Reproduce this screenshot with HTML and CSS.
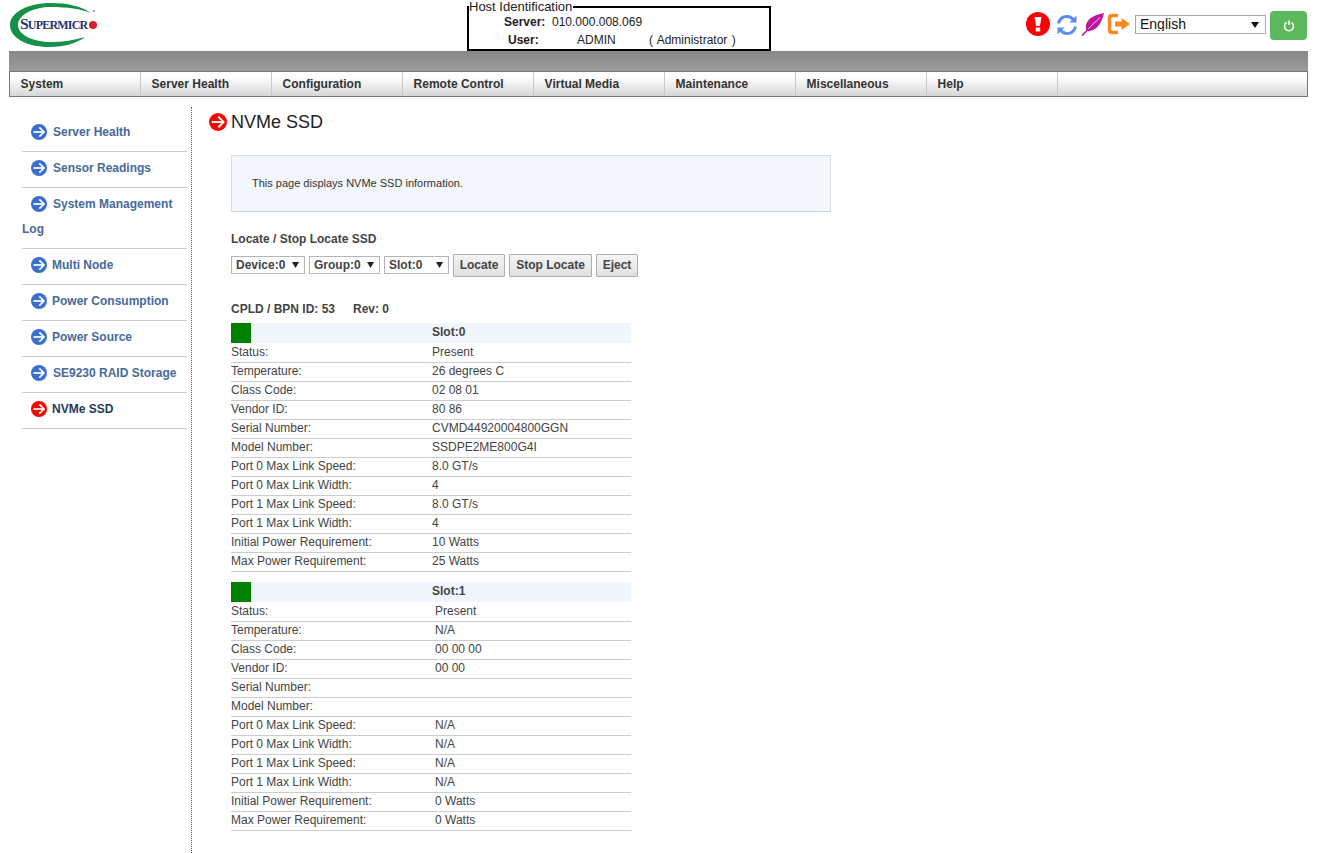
FILE: index.html
```html
<!DOCTYPE html>
<html lang="en">
<head>
<meta charset="utf-8">
<title>NVMe SSD</title>
<link rel="stylesheet" href="styles.css">
</head>
<body>
<svg class="defs" width="0" height="0"><defs>
  <g id="arrow-mark" fill="none" stroke="#fff" stroke-width="1.700"><path d="M2.500 8H12.500"/><path d="M8.300 3.300L13 8l-4.700 4.700"/></g>
</defs></svg>
<header class="top">
  <div class="logo">
    <svg width="92" height="48" viewBox="0 0 92 48">
      <path d="M82 12C72 5 58 2 42 2C18 2 1 12 1 24C1 37 18 46 40 46C56 46 68 42 76 36C66 39 54 41 42 41C24 41 9 34 9 24C9 14 24 6 42 6C58 6 72 8 82 12Z" fill="#149048"/>
      <circle cx="84" cy="24" r="4" fill="#d5202b"/>
      <circle cx="85" cy="10" r="1" fill="#8a8a8a"/>
    </svg>
    <span class="logo-text"><span class="logo-big">S</span>UPERMICR</span>
  </div>
  <fieldset class="host">
    <legend class="host-legend">Host Identification</legend>
    <div class="host-row"><b class="host-key host-server">Server:</b><span>010.000.008.069</span></div>
    <div class="host-row"><b class="host-key host-user">User:</b><span class="host-name">ADMIN</span><span class="host-role">( Administrator )</span></div>
  </fieldset>
  <div class="tools">
    <svg class="tool tool-alert" width="24" height="24" viewBox="0 0 24 24"><circle cx="12" cy="12" r="12" fill="#f00"/><path d="M8.500 5h7l-1.600 9h-3.800z" fill="#fff"/><rect x="9.800" y="15.500" width="4.400" height="4" fill="#fff"/></svg>
    <svg class="tool tool-sync" width="22" height="22" viewBox="0 0 22 22" fill="none" stroke="#5b8def" stroke-width="3"><path d="M2.500 9.500C3.500 5 7 2.500 11 2.500c3 0 5 1.200 6.500 3.500"/><path d="M19.500 12.500C18.500 17 15 19.500 11 19.500c-3 0-5-1.200-6.500-3.500"/><path d="M20.500 1.500v7h-7z" fill="#5b8def" stroke="none"/><path d="M1.500 20.500v-7h7z" fill="#5b8def" stroke="none"/></svg>
    <svg class="tool tool-leaf" width="23" height="24" viewBox="0 0 23 24"><path d="M23 1C15 3 7 5 5 13C4.500 16 5 18 6 19C12 20 20 15 23 1Z" fill="#c0169c"/><path d="M19 5.500L7 17" stroke="#f3c6ea" stroke-width="1" fill="none"/><path d="M7.500 17L1 23.500" stroke="#c0169c" stroke-width="1.600" fill="none"/></svg>
    <svg class="tool tool-exit" width="24" height="24" viewBox="0 0 24 24"><path d="M11 3.500H5Q2.500 3.500 2.500 6v12Q2.500 20.500 5 20.500h6" fill="none" stroke="#fb8a1e" stroke-width="3.500"/><path d="M8 9.500h6.500V6l8.500 6-8.500 6v-3.500H8z" fill="#fb8a1e"/></svg>
    <select class="lang"><option>English</option></select>
    <button class="power" type="button"><svg width="12" height="12" viewBox="0 0 12 12" fill="none" stroke="#fff" stroke-width="1.600"><path d="M3.500 2.500a4.500 4.500 0 1 0 5 0"/><path d="M6 .5v4.500"/></svg></button>
  </div>
</header>
<div class="band"></div>
<nav class="menu">
  <a class="menu-item">System</a><a class="menu-item">Server Health</a><a class="menu-item">Configuration</a><a class="menu-item">Remote Control</a><a class="menu-item">Virtual Media</a><a class="menu-item">Maintenance</a><a class="menu-item">Miscellaneous</a><a class="menu-item">Help</a>
</nav>
<div class="main">
  <aside class="side">
    <a class="side-item"><svg class="arrow" viewBox="0 0 16 16"><circle cx="8" cy="8" r="8" fill="#3a6fd0"/><use href="#arrow-mark"/></svg>Server Health</a>
    <a class="side-item"><svg class="arrow" viewBox="0 0 16 16"><circle cx="8" cy="8" r="8" fill="#3a6fd0"/><use href="#arrow-mark"/></svg>Sensor Readings</a>
    <a class="side-item"><svg class="arrow" viewBox="0 0 16 16"><circle cx="8" cy="8" r="8" fill="#3a6fd0"/><use href="#arrow-mark"/></svg>System Management Log</a>
    <a class="side-item tight"><svg class="arrow" viewBox="0 0 16 16"><circle cx="8" cy="8" r="8" fill="#3a6fd0"/><use href="#arrow-mark"/></svg>Multi Node</a>
    <a class="side-item tight"><svg class="arrow" viewBox="0 0 16 16"><circle cx="8" cy="8" r="8" fill="#3a6fd0"/><use href="#arrow-mark"/></svg>Power Consumption</a>
    <a class="side-item tight"><svg class="arrow" viewBox="0 0 16 16"><circle cx="8" cy="8" r="8" fill="#3a6fd0"/><use href="#arrow-mark"/></svg>Power Source</a>
    <a class="side-item"><svg class="arrow" viewBox="0 0 16 16"><circle cx="8" cy="8" r="8" fill="#3a6fd0"/><use href="#arrow-mark"/></svg>SE9230 RAID Storage</a>
    <a class="side-item tight active"><svg class="arrow" viewBox="0 0 16 16"><circle cx="8" cy="8" r="8" fill="#f00"/><use href="#arrow-mark"/></svg>NVMe SSD</a>
  </aside>
  <main class="content">
    <h1 class="title"><svg class="title-arrow" viewBox="0 0 16 16"><circle cx="8" cy="8" r="8" fill="#f00"/><use href="#arrow-mark"/></svg>NVMe SSD</h1>
    <div class="body">
      <div class="note">This page displays NVMe SSD information.</div>
      <h2 class="locate-title">Locate / Stop Locate SSD</h2>
      <form class="locate">
        <select class="pick pick-device"><option>Device:0</option></select>
        <select class="pick pick-group"><option>Group:0</option></select>
        <select class="pick pick-slot"><option>Slot:0</option></select>
        <button class="btn btn-locate" type="button">Locate</button>
        <button class="btn btn-stop" type="button">Stop Locate</button>
        <button class="btn btn-eject" type="button">Eject</button>
      </form>
      <p class="cpld"><span class="cpld-id">CPLD / BPN ID: 53</span><span>Rev: 0</span></p>
      <table class="slot">
        <tr class="slot-head"><td class="k"><span class="led"></span></td><td class="v">Slot:0</td></tr>
        <tr><td class="k">Status:</td><td class="v">Present</td></tr>
        <tr><td class="k">Temperature:</td><td class="v">26 degrees C</td></tr>
        <tr><td class="k">Class Code:</td><td class="v">02 08 01</td></tr>
        <tr><td class="k">Vendor ID:</td><td class="v">80 86</td></tr>
        <tr><td class="k">Serial Number:</td><td class="v">CVMD44920004800GGN</td></tr>
        <tr><td class="k">Model Number:</td><td class="v">SSDPE2ME800G4I</td></tr>
        <tr><td class="k">Port 0 Max Link Speed:</td><td class="v">8.0 GT/s</td></tr>
        <tr><td class="k">Port 0 Max Link Width:</td><td class="v">4</td></tr>
        <tr><td class="k">Port 1 Max Link Speed:</td><td class="v">8.0 GT/s</td></tr>
        <tr><td class="k">Port 1 Max Link Width:</td><td class="v">4</td></tr>
        <tr><td class="k">Initial Power Requirement:</td><td class="v">10 Watts</td></tr>
        <tr><td class="k">Max Power Requirement:</td><td class="v">25 Watts</td></tr>
      </table>
      <table class="slot slot-second">
        <tr class="slot-head"><td class="k"><span class="led"></span></td><td class="v">Slot:1</td></tr>
        <tr><td class="k">Status:</td><td class="v">Present</td></tr>
        <tr><td class="k">Temperature:</td><td class="v">N/A</td></tr>
        <tr><td class="k">Class Code:</td><td class="v">00 00 00</td></tr>
        <tr><td class="k">Vendor ID:</td><td class="v">00 00</td></tr>
        <tr><td class="k">Serial Number:</td><td class="v"></td></tr>
        <tr><td class="k">Model Number:</td><td class="v"></td></tr>
        <tr><td class="k">Port 0 Max Link Speed:</td><td class="v">N/A</td></tr>
        <tr><td class="k">Port 0 Max Link Width:</td><td class="v">N/A</td></tr>
        <tr><td class="k">Port 1 Max Link Speed:</td><td class="v">N/A</td></tr>
        <tr><td class="k">Port 1 Max Link Width:</td><td class="v">N/A</td></tr>
        <tr><td class="k">Initial Power Requirement:</td><td class="v">0 Watts</td></tr>
        <tr><td class="k">Max Power Requirement:</td><td class="v">0 Watts</td></tr>
      </table>
    </div>
  </main>
</div>
</body>
</html>
```
FILE: styles.css
```css
* { box-sizing: border-box; }
html, body { margin: 0; height: 853px; overflow: hidden; }
body { background: #fff; color: #333; font-family: "Liberation Sans", Arial, sans-serif; font-size: 12px; }
.defs { position: absolute; }

.top { display: flex; height: 51px; position: relative; }
.logo { position: absolute; left: 9px; top: 1px; width: 92px; height: 48px; }
.logo-text { position: absolute; left: 11px; top: 14px; font-family: "Liberation Serif", serif; font-size: 12px; font-weight: bold; color: #27346f; letter-spacing: -.8px; white-space: nowrap; }
.logo-big { font-size: 15.500px; }

.host { position: absolute; left: 467px; top: 6px; width: 304px; height: 45px; margin: 0; padding: 0; border: 2px solid #000; color: #222; }
.host-legend { position: absolute; left: 0; top: -9px; padding: 0 1px 0 0; background: #fff; font-size: 13px; line-height: 15px; color: #222; white-space: nowrap; }
.host-row { display: flex; height: 18px; align-items: center; font-size: 12px; }
.host-row:first-of-type { height: 19px; margin-top: 4px; }
.host-key { color: #222; }
.host-server { margin-left: 35px; width: 48px; }
.host-user { margin-left: 39px; width: 69px; }
.host-name { width: 72px; }
.host-role { word-spacing: 1px; }

.tools { position: absolute; left: 1026px; top: 12px; display: flex; align-items: flex-start; }
.tool { flex: none; }
.tool-sync { margin: 2px 3px 0 6px; }
.tool-leaf { margin-right: 3px; }
.tool-exit { margin-right: 4px; }
.lang { width: 131px; height: 19px; margin-top: 3px; padding: 0 0 2px 4px; appearance: none; background: #fff url("data:image/svg+xml,%3Csvg xmlns='http://www.w3.org/2000/svg' width='8' height='6'%3E%3Cpath d='M0 0h8L4 6z' fill='%23111'/%3E%3C/svg%3E") no-repeat right 6px center; border: 1px solid #a9a9a9; font-family: "Liberation Sans", Arial, sans-serif; font-size: 14px; color: #111; border-radius: 0; }
.power { width: 37px; height: 29px; margin: -1px 0 0 4px; display: flex; align-items: center; justify-content: center; background: #5cb85c; border: 0; border-radius: 4px; padding: 0; }

.band { height: 20px; margin: 0 17px 0 9px; background: linear-gradient(#888, #9c9c9c); }
.menu { display: flex; height: 26px; margin: 0 17px 0 9px; border: 1px solid #777; background: linear-gradient(#fff 20%, #d6d6d6); }
.menu-item { width: 131px; padding: 5px 0 0 10.600px; border-right: 1px solid #c9c9c9; font-size: 12px; line-height: 15px; font-weight: bold; color: #333; }

.main { display: flex; height: 756px; }
.side { width: 192px; margin: 10px 0 0 0; padding: 9px 4px 0 22px; border-right: 1px dotted #36618f; flex: none; }
.side-item { display: block; padding: 4px 0 0 9px; border-bottom: 1px solid #ccc; font-weight: bold; font-size: 12px; line-height: 25px; height: 36px; color: #466a99; }
.side-item:nth-child(3) { height: 61px; padding-left: 0; text-indent: 9px; }
.arrow { width: 16px; height: 16px; vertical-align: -4px; margin-right: 6px; }
.side-item.tight .arrow { margin-right: 5px; }
.side-item.active { color: #1f3a5f; }

.content { flex: 1; padding-left: 17px; }
.title { display: flex; align-items: center; margin: 15px 0 0; font-size: 18px; line-height: 20px; font-weight: normal; color: #222; }
.title-arrow { width: 18px; height: 18px; margin-right: 4px; }
.body { padding-left: 22px; }
.note { width: 600px; height: 57px; margin-top: 23px; padding: 20px 0 0 20px; background: #f3f7fc; border: 1px solid #d5dde5; border-bottom-color: #c5d0da; font-size: 11px; line-height: 14px; color: #333; }
.locate-title { margin: 20px 0 0; font-size: 12px; line-height: 15px; font-weight: bold; color: #444; }
.locate { display: flex; align-items: center; gap: 4px; margin-top: 6px; height: 24px; }
.pick { height: 18px; padding: 0 0 0 4px; appearance: none; background: #fff url("data:image/svg+xml,%3Csvg xmlns='http://www.w3.org/2000/svg' width='7' height='6'%3E%3Cpath d='M0 0h7L3.500 6z' fill='%23222'/%3E%3C/svg%3E") no-repeat right 5px center; border: 1px solid #b5b5b5; font-family: "Liberation Sans", Arial, sans-serif; font-size: 12px; font-weight: bold; color: #444; border-radius: 0; }
.pick-device { width: 74px; }
.pick-group { width: 71px; }
.pick-slot { width: 65px; }
.btn { height: 23px; padding: 0 0 1px; background: linear-gradient(#f5f5f5, #e0e0e0); border: 1px solid #adadad; border-radius: 1px; font-family: "Liberation Sans", Arial, sans-serif; font-size: 12px; font-weight: bold; color: #444; }
.btn-locate { width: 52px; }
.btn-stop { width: 83px; }
.btn-eject { width: 42px; }
.cpld { display: flex; margin: 25px 0 0; font-size: 12px; line-height: 15px; font-weight: bold; color: #444; }
.cpld-id { width: 122px; }

.slot { width: 400px; margin-top: 6px; border-collapse: separate; border-spacing: 0; table-layout: fixed; font-size: 12px; color: #444; }
.slot td { height: 19px; padding: 0 0 2px; border-bottom: 1px solid #ccc; line-height: 14px; }
.slot tr:nth-child(2) td { height: 20px; }
.slot .k { width: 201px; }
.slot-second { margin-top: 10px; }
.slot-second tr:not(.slot-head) .v { padding-left: 3px; }
.slot .slot-head td { height: 20px; padding: 0 0 2px; background: #f1f6fc; border-bottom: 0; font-weight: bold; }
.slot .slot-head .k { padding: 0; }
.led { display: block; width: 20px; height: 20px; background: #008000; }
```
